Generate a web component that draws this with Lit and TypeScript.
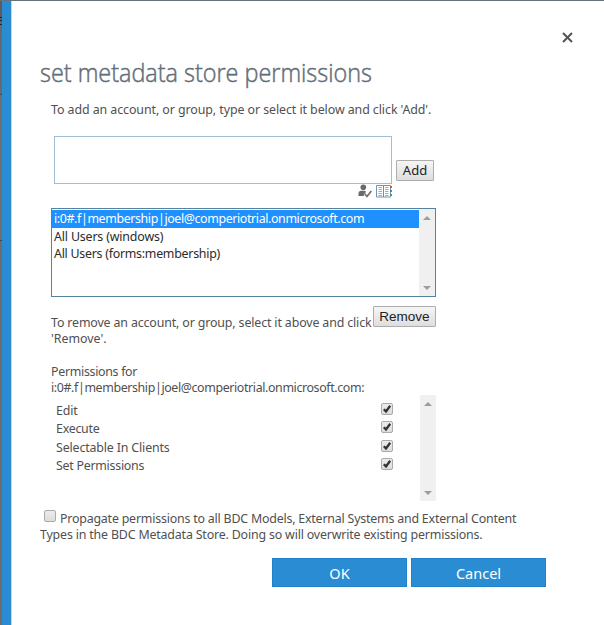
import { LitElement, html, css, svg } from "lit";
import { customElement, state, property } from "lit/decorators.js";
import { classMap } from "lit/directives/class-map.js";

@customElement("scroll-track")
class ScrollTrack extends LitElement {
  static styles = css`
    :host { display: flex; flex-direction: column; justify-content: space-between; align-items: center; width: 16px; background: #f0f0f0; padding: 7px 0 6px; box-sizing: border-box; }
    svg { display: block; }
  `;
  render() {
    return html`
      <svg width="8" height="4" viewBox="0 0 8 4"><path d="M4 0L8 4H0Z" fill="#9d9d9d" /></svg>
      <svg width="8" height="4" viewBox="0 0 8 4"><path d="M0 0H8L4 4Z" fill="#9d9d9d" /></svg>
    `;
  }
}

@customElement("check-box")
class CheckBox extends LitElement {
  @property({ type: Boolean }) checked = false;
  static styles = css`
    :host { display: block; width: 12px; height: 12px; flex: none; }
    svg { display: block; overflow: visible; }
  `;
  render() {
    return html`
      <svg width="12" height="12" viewBox="0 0 12 12">
        <defs><linearGradient id="g" x2="0" y2="1"><stop stop-color="#ececec" /><stop offset="1" stop-color="#dcdcdc" /></linearGradient></defs>
        <rect x=".5" y=".5" width="11" height="11" rx="1.5" fill="url(#g)" stroke="#ababab" />
        ${this.checked ? svg`<path d="M2.8 6.2L5 8.4L9.2 2.8" fill="none" stroke="#333" stroke-width="2.3" />` : ""}
      </svg>
    `;
  }
}

@customElement("app-root")
class AppRoot extends LitElement {
  @state() selected = 0;
  private accounts = [
    { name: "i:0#.f|membership|joel@comperiotrial.onmicrosoft.com", cls: "a1" },
    { name: "All Users (windows)", cls: "a2" },
    { name: "All Users (forms:membership)", cls: "a3" },
  ];
  private rights = [
    { name: "Edit", cls: "r1" },
    { name: "Execute", cls: "r2" },
    { name: "Selectable In Clients", cls: "r3" },
    { name: "Set Permissions", cls: "r4" },
  ];

  static styles = css`
    :host { display: block; width: 604px; height: 625px; overflow: hidden; font-family: "Noto Sans", "Open Sans", sans-serif; font-size: 12.4px; line-height: 16px; color: #505050; background: #fff; white-space: nowrap; }
    * { box-sizing: border-box; }
    .frame { display: flex; height: 625px; border-top: 1px solid #66727d; }
    .backdrop { width: 2px; background: linear-gradient(#5c5c5e 0 16px, #1e2226 16px 17px, #5c646b 17px 19px, #1e2226 19px 20px, #5c646b 20px 23px, #1e2226 23px 24px, #646a70 24px 93px, #45494d 93px 94px, #6d6f71 94px 239px, #45494d 239px 240px, #6d6d6d 240px); }
    .accent { width: 10px; background: #2a8dd4; border-right: 1px solid #b4dcf5; }
    .dialog { flex: 1; padding-left: 28px; display: flex; flex-direction: column; align-items: flex-start; }
    .top { height: 57px; width: 100%; display: flex; justify-content: flex-end; padding: 31px 31px 0 0; }
    .top svg { display: block; }
    h1 { margin: 0; height: 36px; font: 300 26px/29px "Open Sans", sans-serif; color: #5f6b75; }
    .title { display: inline-block; transform: scaleX(0.9); transform-origin: 0 0; -webkit-text-stroke: 0.5px #66727c; }
    .content { padding-left: 11px; width: 397px; display: flex; flex-direction: column; }
    .intro { height: 41px; padding-top: 8px; }
    .picker { display: flex; align-items: flex-start; padding-left: 3px; height: 73px; }
    .field { width: 338px; height: 48px; border: 1px solid #a3bdd2; margin-top: 1px; }
    .entry { width: 338px; }
    .tools { display: flex; justify-content: flex-end; gap: 4px; }
    .btn { height: 21px; border: 1px solid #adadad; border-radius: 1px; background: linear-gradient(#f5f5f5, #dedede); color: #222; display: flex; align-items: center; justify-content: center; }
    .add { width: 38px; margin: 25px 0 0 4px; padding-bottom: 2px; font-size: 13px; }
    .remove { width: 63px; padding-bottom: 1px; font: 13.5px "Liberation Sans", sans-serif; }
    .list { display: flex; width: 385px; height: 89px; border: 1px solid #54829f; color: #2b2b2b; }
    .options { flex: 1; padding-top: 1px; }
    .option { height: 17.5px; line-height: 17px; padding-left: 2px; }
    .chosen { background: #1e90ff; color: #fff; }
    .removal { display: flex; height: 67px; padding-top: 9px; }
    .note { width: 322px; padding-top: 9px; flex: none; }
    .for { height: 31px; }
    .rights { display: flex; height: 106px; width: 385px; }
    .rows { flex: 1; padding: 8px 27px 0 5px; }
    .right { display: flex; justify-content: space-between; height: 18.3px; }
    .right check-box { margin-top: 0; }
    .propagate { padding-top: 10px; height: 57px; }
    .first { display: flex; }
    .first check-box { margin: -1px 4px 0 4px; }
    .footer { display: flex; gap: 5px; padding-left: 232px; }
    .action { width: 135px; height: 29px; background: #2a8dd4; border: 1px solid #1f81c9; color: #fff; font-size: 14.5px; display: flex; align-items: center; justify-content: center; }
    .action + .action { margin-left: -1px; }
    .t1 { letter-spacing: -0.07px; }
    .a1, .p2 { letter-spacing: -0.375px; }
    .a2 { letter-spacing: -0.16px; }
    .a3, .r2, .r4 { letter-spacing: -0.26px; }
    .n1 { letter-spacing: -0.14px; }
    .p1 { letter-spacing: -0.3px; }
    .r1, .r3 { letter-spacing: -0.15px; }
    .g1 { letter-spacing: -0.2px; }
    .g2 { letter-spacing: -0.17px; }
  `;

  render() {
    return html`
      <div class="frame">
        <div class="backdrop"></div>
        <div class="accent"></div>
        <main class="dialog">
          <div class="top">
            <svg width="11" height="11" viewBox="0 0 11 11"><path d="M1 1L10 10M10 1L1 10" stroke="#555" stroke-width="2" /></svg>
          </div>
          <h1><span class="title">set metadata store permissions</span></h1>
          <section class="content">
            <div class="intro"><span class="t1">To add an account, or group, type or select it below and click 'Add'.</span></div>
            <div class="picker">
              <div class="entry">
                <div class="field"></div>
                <div class="tools">
                  <svg width="14" height="14" viewBox="0 0 14 14"><circle cx="5.3" cy="3.2" r="2.8" fill="#6a6a6a" /><path d="M.5 12V9Q.5 7 3 6.8H7L8 8L6.5 9.5L8.5 12Z" fill="#6a6a6a" /><path d="M6.8 9.8L9 12.4L13.3 7" fill="none" stroke="#fff" stroke-width="3.4" /><path d="M6.8 9.8L9 12.4L13.3 7" fill="none" stroke="#6a6a6a" stroke-width="1.6" /></svg>
                  <svg width="16" height="14" viewBox="0 0 16 14"><path d="M.5 1.5H14.5V13H.5Z" fill="#fff" stroke="#7094b4" /><path d="M7.5 2V13" stroke="#888" /><path d="M2.5 3.5H6M2.5 5.5H6M2.5 7.5H6M2.5 9.5H6M2.5 11.5H6M9 3.5H12.5M9 5.5H12.5M9 7.5H12.5M9 9.5H12.5M9 11.5H12.5" stroke="#aaa" /><path d="M14 2H16V4H14Z" fill="#d9532f" /><path d="M14 6H16V8H14Z" fill="#3f87c6" /><path d="M14 10H16V12H14Z" fill="#4a9a62" /></svg>
                </div>
              </div>
              <div class="btn add">Add</div>
            </div>
            <div class="list">
              <div class="options">
                ${this.accounts.map((a, i) => html`<div class=${classMap({ option: true, chosen: i === this.selected })} @click=${() => (this.selected = i)}><span class=${a.cls}>${a.name}</span></div>`)}
              </div>
              <scroll-track></scroll-track>
            </div>
            <div class="removal">
              <div class="note"><span class="n1">To remove an account, or group, select it above and click</span><br /><span class="n2">'Remove'.</span></div>
              <div class="btn remove">Remove</div>
            </div>
            <div class="for"><span class="p1">Permissions for</span><br /><span class="p2">${this.accounts[this.selected].name}:</span></div>
            <div class="rights">
              <div class="rows">
                ${this.rights.map((r) => html`<div class="right"><span class=${r.cls}>${r.name}</span><check-box checked></check-box></div>`)}
              </div>
              <scroll-track></scroll-track>
            </div>
          </section>
          <div class="propagate">
            <div class="first"><check-box></check-box><span class="g1">Propagate permissions to all BDC Models, External Systems and External Content</span></div>
            <span class="g2">Types in the BDC Metadata Store. Doing so will overwrite existing permissions.</span>
          </div>
          <div class="footer"><div class="action">OK</div><div class="action">Cancel</div></div>
        </main>
      </div>
    `;
  }
}
